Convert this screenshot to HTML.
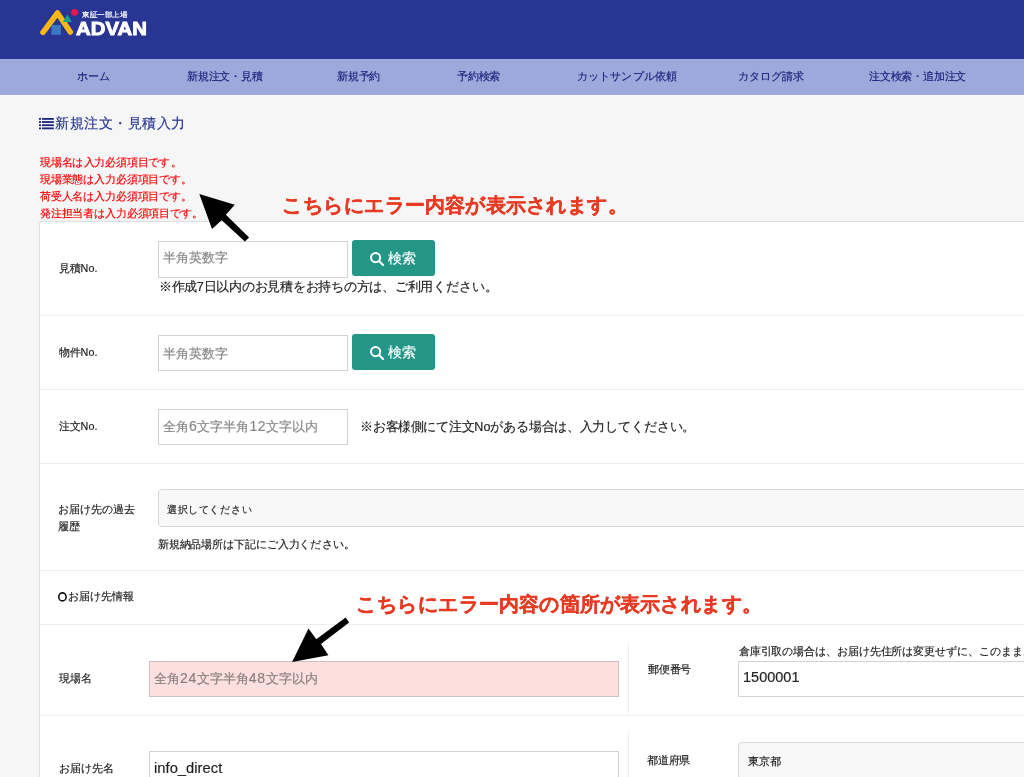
<!DOCTYPE html>
<html><head><meta charset="utf-8">
<style>
html,body{margin:0;padding:0}
body{width:1024px;height:777px;overflow:hidden;position:relative;background:#f6f6f6;font-family:"Liberation Sans",sans-serif;color:#333}
.a{position:absolute}
i{font-style:normal;letter-spacing:6.0px;font-size:1.08em}
.t{position:absolute;white-space:nowrap;line-height:1;will-change:transform;-webkit-text-stroke:1.75px currentColor;transform:scale(0.1);transform-origin:0 0}
.sep{position:absolute;left:40px;width:990px;height:1px;background:#eeeeee}
.vsep{position:absolute;width:1px;background:#eeeeee}
.inp{position:absolute;box-sizing:border-box;border:1px solid #d2d2d2;background:#fff}
.btn{position:absolute;background:#249687;border-radius:3px}
.sel{position:absolute;box-sizing:border-box;border:1px solid #d8d8d8;background:#f8f8f8;border-radius:4px}
</style></head><body>
<div class="a" style="left:0;top:0;width:1024px;height:59px;background:#283593"></div>
<div class="a" style="left:0;top:59px;width:1024px;height:36px;background:#9fa8da"></div>
<svg class="a" style="left:0;top:0;will-change:transform" width="160" height="59" viewBox="0 0 160 59">
  <path d="M43 32.3 L57.5 13 L70.3 32" fill="none" stroke="#fbb714" stroke-width="5.5" stroke-linecap="round" stroke-linejoin="round"/>
  <rect x="51.4" y="25" width="9.5" height="9.8" fill="#3a78c0"/>
  <polygon points="67.3,14.5 62.9,21.9 71.9,21.9" fill="#1aa38a"/>
  <circle cx="74.6" cy="12.3" r="3.4" fill="#e8174f"/>
  <text x="82" y="16.9" font-size="6.6" fill="#fff" stroke="#fff" stroke-width="0.2" textLength="45" lengthAdjust="spacingAndGlyphs">東証一部上場</text>
  <text x="76.1" y="34.6" font-size="18" font-weight="bold" fill="#fff" stroke="#fff" stroke-width="0.9" textLength="70.8" lengthAdjust="spacingAndGlyphs" font-family="Liberation Sans">ADVAN</text>
</svg>
<svg class="a" style="left:39px;top:118px" width="15" height="12" viewBox="0 0 15 12">
  <g fill="#1a237e">
    <rect x="0" y="0" width="2" height="1.8"/><rect x="3" y="0" width="11.8" height="1.8"/>
    <rect x="0" y="3.15" width="2" height="1.8"/><rect x="3" y="3.15" width="11.8" height="1.8"/>
    <rect x="0" y="6.3" width="2" height="1.8"/><rect x="3" y="6.3" width="11.8" height="1.8"/>
    <rect x="0" y="9.45" width="2" height="1.8"/><rect x="3" y="9.45" width="11.8" height="1.8"/>
  </g>
</svg>
<div class="a" style="left:39px;top:221px;width:1100px;height:700px;box-sizing:border-box;background:#fff;border:1px solid #dedede;border-radius:3px"></div>
<div class="sep" style="top:315px"></div>
<div class="sep" style="top:389px"></div>
<div class="sep" style="top:463px"></div>
<div class="sep" style="top:570px"></div>
<div class="sep" style="top:624px"></div>
<div class="sep" style="top:715px"></div>
<div class="vsep" style="left:628px;top:643px;height:72px"></div>
<div class="vsep" style="left:628px;top:732px;height:60px"></div>

<div class="inp" style="left:158px;top:241.2px;width:190px;height:36.4px"></div>
<div class="btn" style="left:352px;top:240px;width:83px;height:36px"></div>
<svg class="a" style="left:369px;top:251px" width="16" height="16" viewBox="0 0 16 16"><circle cx="6.6" cy="6.6" r="4.6" fill="none" stroke="#fff" stroke-width="2"/><line x1="10" y1="10" x2="14" y2="14" stroke="#fff" stroke-width="2.2" stroke-linecap="round"/></svg>
<div class="inp" style="left:158px;top:335px;width:190px;height:36px"></div>
<div class="btn" style="left:352px;top:334px;width:83px;height:36px"></div>
<svg class="a" style="left:369px;top:345px" width="16" height="16" viewBox="0 0 16 16"><circle cx="6.6" cy="6.6" r="4.6" fill="none" stroke="#fff" stroke-width="2"/><line x1="10" y1="10" x2="14" y2="14" stroke="#fff" stroke-width="2.2" stroke-linecap="round"/></svg>
<div class="inp" style="left:158px;top:408.5px;width:190px;height:36px"></div>
<div class="sel" style="left:157.6px;top:489.2px;width:900px;height:38.2px"></div>
<svg class="a" style="left:50px;top:590px" width="20" height="16" viewBox="0 0 20 16"><ellipse cx="12.45" cy="6.9" rx="3.67" ry="4.0" fill="none" stroke="#111" stroke-width="1.6"/></svg>
<div class="inp" style="left:149px;top:661px;width:470px;height:36px;background:#fde0de;border-color:#c9c0c0"></div>
<div class="inp" style="left:738px;top:661px;width:400px;height:36px"></div>
<div class="inp" style="left:149px;top:751px;width:470px;height:36px"></div>
<div class="sel" style="left:738px;top:741.7px;width:400px;height:38px"></div>

<div class="t" style="left:76.60px;top:70.57px;font-size:108.00px;color:#1a237e;">ホーム</div>
<div class="t" style="left:187.30px;top:70.57px;font-size:108.00px;color:#1a237e;">新規注文・見積</div>
<div class="t" style="left:336.60px;top:70.57px;font-size:108.00px;color:#1a237e;">新規予約</div>
<div class="t" style="left:456.70px;top:70.57px;font-size:108.00px;color:#1a237e;">予約検索</div>
<div class="t" style="left:576.60px;top:70.57px;font-size:108.00px;color:#1a237e;">カットサンプル依頼</div>
<div class="t" style="left:738.30px;top:70.57px;font-size:108.00px;color:#1a237e;">カタログ請求</div>
<div class="t" style="left:868.50px;top:70.57px;font-size:108.00px;color:#1a237e;">注文検索・追加注文</div>
<div class="t" style="left:55.10px;top:116.42px;font-size:145.00px;color:#283593;">新規注文・見積入力</div>
<div class="t" style="left:39.80px;top:157.07px;font-size:108.00px;color:#f00;">現場名は入力必須項目です。</div>
<div class="t" style="left:39.80px;top:173.94px;font-size:108.00px;color:#f00;">現場業態は入力必須項目です。</div>
<div class="t" style="left:39.80px;top:190.81px;font-size:108.00px;color:#f00;">荷受人名は入力必須項目です。</div>
<div class="t" style="left:39.80px;top:207.68px;font-size:108.00px;color:#f00;">発注担当者は入力必須項目です。</div>
<div class="t" style="left:58.75px;top:262.57px;font-size:108.00px;color:#222;">見積No.</div>
<div class="t" style="left:163.30px;top:251.18px;font-size:130.00px;color:#888;">半角英数字</div>
<div class="t" style="left:388.40px;top:250.64px;font-size:140.00px;color:#fff;">検索</div>
<div class="t" style="left:159.40px;top:279.50px;font-size:126.20px;color:#222;">※作成7日以内のお見積をお持ちの方は、ご利用ください。</div>
<div class="t" style="left:58.55px;top:347.07px;font-size:108.00px;color:#222;">物件No.</div>
<div class="t" style="left:163.30px;top:347.08px;font-size:130.00px;color:#888;">半角英数字</div>
<div class="t" style="left:388.40px;top:344.54px;font-size:140.00px;color:#fff;">検索</div>
<div class="t" style="left:58.55px;top:421.07px;font-size:108.00px;color:#222;">注文No.</div>
<div class="t" style="left:162.70px;top:419.28px;font-size:130.00px;color:#888;">全角<i>6</i>文字半角<i>12</i>文字以内</div>
<div class="t" style="left:360.30px;top:419.90px;font-size:126.20px;color:#222;">※お客様側にて注文Noがある場合は、入力してください。</div>
<div class="t" style="left:58.30px;top:503.57px;font-size:108.00px;color:#222;">お届け先の過去</div>
<div class="t" style="left:58.30px;top:520.77px;font-size:108.00px;color:#222;">履歴</div>
<div class="t" style="left:166.90px;top:503.58px;font-size:105.00px;color:#222;">選択してください</div>
<div class="t" style="left:157.70px;top:538.57px;font-size:108.00px;color:#222;">新規納品場所は下記にご入力ください。</div>
<div class="t" style="left:67.80px;top:590.57px;font-size:108.00px;color:#222;">お届け先情報</div>
<div class="t" style="left:59.20px;top:673.07px;font-size:108.00px;color:#222;">現場名</div>
<div class="t" style="left:154.10px;top:670.68px;font-size:130.00px;color:#8a7f7f;">全角<i>24</i>文字半角<i>48</i>文字以内</div>
<div class="t" style="left:647.90px;top:664.37px;font-size:108.00px;color:#222;">郵便番号</div>
<div class="t" style="left:738.60px;top:646.07px;font-size:108.00px;color:#222;">倉庫引取の場合は、お届け先住所は変更せずに、このままお届け</div>
<div class="t" style="left:743.30px;top:670.28px;font-size:145.00px;color:#222;">1500001</div>
<div class="t" style="left:59.20px;top:763.37px;font-size:108.00px;color:#222;">お届け先名</div>
<div class="t" style="left:153.60px;top:760.78px;font-size:148.00px;color:#222;">info_direct</div>
<div class="t" style="left:647.30px;top:754.57px;font-size:108.00px;color:#222;">都道府県</div>
<div class="t" style="left:747.80px;top:755.77px;font-size:108.00px;color:#222;">東京都</div>
<div class="t" style="left:281.70px;top:195.04px;font-size:200.00px;color:#e83a22;font-weight:bold;-webkit-text-stroke:5px #e83a22">こちらにエラー内容が表示されます。</div>
<div class="t" style="left:355.80px;top:593.64px;font-size:200.00px;color:#e83a22;font-weight:bold;-webkit-text-stroke:5px #e83a22">こちらにエラー内容の箇所が表示されます。</div>

<svg class="a" style="left:0;top:0" width="1024" height="777" viewBox="0 0 1024 777">
  <polygon points="199.3,193.9 234.8,204.7 225.9,214.75 249.1,237.5 244.9,241.4 221.7,220.2 212,229" fill="#000"/>
  <polygon points="292.1,662 308.5,628.4 316.3,639.3 345.6,617.4 349.1,622.5 321,644 328.4,655.3" fill="#000"/>
</svg>
</body></html>
